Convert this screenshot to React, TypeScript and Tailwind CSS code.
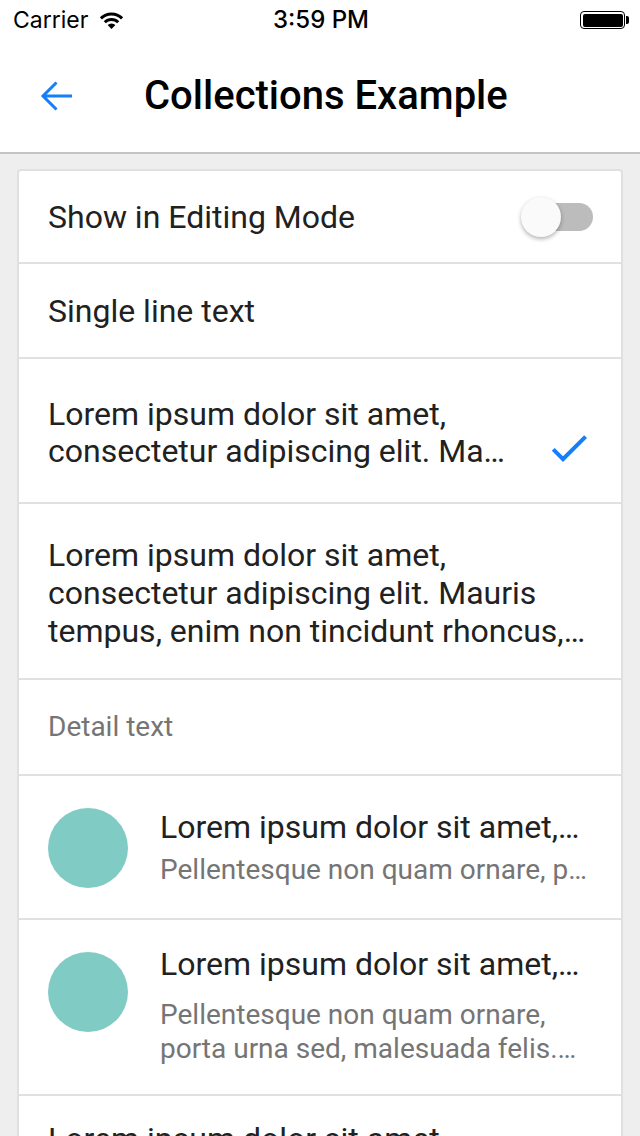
import React from "react";

const divider = "border-b-2 border-[#e0e0e0]";

function StatusBar() {
  return (
    <div className="flex h-[40px] items-center bg-white font-['Inter',sans-serif] text-black">
      <div className="flex flex-1 items-center pl-[13px]">
        <span className="text-[23px] leading-none">Carrier</span>
        <svg width="25" height="17" viewBox="0 0 25 17" className="ml-[11px]">
          <path d="M12.5 17 L8.6 13.1 A5.5 5.5 0 0 1 16.4 13.1 Z" fill="black" />
          <path d="M5.8 10.3 A9.5 9.5 0 0 1 19.2 10.3" stroke="black" strokeWidth="3" fill="none" />
          <path d="M1.9 6.4 A15 15 0 0 1 23.1 6.4" stroke="black" strokeWidth="3" fill="none" />
        </svg>
      </div>
      <span className="text-[24px] font-medium leading-none">3:59 PM</span>
      <div className="flex flex-1 items-center justify-end pr-[11px]">
        <div className="h-[18px] w-[45px] rounded-[4px] border-[1.5px] border-black p-[1.5px]">
          <div className="h-full w-full rounded-[2px] bg-black" />
        </div>
        <div className="ml-[1px] h-[8px] w-[3px] rounded-r-[2px] bg-black" />
      </div>
    </div>
  );
}

function NavBar() {
  return (
    <div className="flex h-[114px] items-center border-b-2 border-[#c4c4c4] bg-white pl-[40px]">
      <svg width="32" height="32" viewBox="0 0 32 32" fill="none">
        <path d="M32 16H3M16.5 2.5L3 16l13.5 13.5" stroke="#157efb" strokeWidth="3" />
      </svg>
      <h1 className="ml-[72px] text-[40px] font-medium leading-none text-black">Collections Example</h1>
    </div>
  );
}

function Toggle() {
  return (
    <div className="relative flex h-[40px] w-[72px] items-center justify-end">
      <div className="h-[28px] w-[68px] rounded-full bg-[#bcbcbc]" />
      <div className="absolute left-0 top-0 h-[40px] w-[40px] rounded-full bg-[#fafafa] shadow-[0_2px_4px_rgba(0,0,0,0.3)]" />
    </div>
  );
}

function Avatar() {
  return <div className="h-[80px] w-[80px] shrink-0 rounded-full bg-[#80cbc4]" />;
}

export default function App() {
  return (
    <div className="h-[1136px] overflow-hidden bg-[#eeeeee] font-['Roboto',sans-serif] text-[#212121]">
      <StatusBar />
      <NavBar />

      <div className="mx-[17px] mt-[15px] rounded-[4px] border-2 border-[#e0e0e0] bg-white">
        <div className={`flex h-[93px] items-center justify-between pl-[29px] pr-[28px] ${divider}`}>
          <span className="text-[32px] leading-[38px]">Show in Editing Mode</span>
          <Toggle />
        </div>

        <div className={`flex h-[95px] items-center pl-[29px] ${divider}`}>
          <span className="text-[32px] leading-[38px]">Single line text</span>
        </div>

        <div className={`flex h-[145px] items-start pl-[29px] pr-[28px] pt-[37px] ${divider}`}>
          <p className="flex-1 pr-[20px] text-[32px] leading-[37px]">
            Lorem ipsum dolor sit amet, consectetur adipiscing elit. Ma…
          </p>
          <svg width="48" height="48" viewBox="0 0 24 24" className="-mt-[2px] self-center">
            <path d="M9 16.17L4.83 12l-1.42 1.41L9 19 21 7l-1.41-1.41z" fill="#157efb" />
          </svg>
        </div>

        <div className={`h-[176px] pl-[29px] pr-[30px] pt-[32px] ${divider}`}>
          <p className="text-[32px] leading-[38px]">
            Lorem ipsum dolor sit amet, consectetur adipiscing elit. Mauris tempus, enim non tincidunt rhoncus,…
          </p>
        </div>

        <div className={`flex h-[96px] items-center pl-[29px] ${divider}`}>
          <span className="text-[28px] leading-[32px] text-[#757575]">Detail text</span>
        </div>

        <div className={`flex h-[144px] items-start pl-[29px] pr-[30px] pt-[32px] ${divider}`}>
          <Avatar />
          <div className="ml-[32px] min-w-0 flex-1">
            <p className="whitespace-nowrap text-[32px] leading-[38px]">Lorem ipsum dolor sit amet,…</p>
            <p className="mt-[8px] whitespace-nowrap text-[28px] leading-[32px] text-[#757575]">
              Pellentesque non quam ornare, p…
            </p>
          </div>
        </div>

        <div className={`flex h-[176px] items-start pl-[29px] pr-[30px] pt-[25px] ${divider}`}>
          <div className="mt-[7px]">
            <Avatar />
          </div>
          <div className="ml-[32px] min-w-0 flex-1">
            <p className="whitespace-nowrap text-[32px] leading-[38px]">Lorem ipsum dolor sit amet,…</p>
            <p className="mt-[15px] text-[28px] leading-[34px] text-[#757575]">
              Pellentesque non quam ornare, porta urna sed, malesuada felis.…
            </p>
          </div>
        </div>

        <div className="h-[176px] pl-[29px] pr-[30px] pt-[24px]">
          <p className="text-[32px] leading-[38px]">
            Lorem ipsum dolor sit amet, consectetur adipiscing elit. Mauris tempus, enim non tincidunt rhoncus,…
          </p>
        </div>
      </div>
    </div>
  );
}
